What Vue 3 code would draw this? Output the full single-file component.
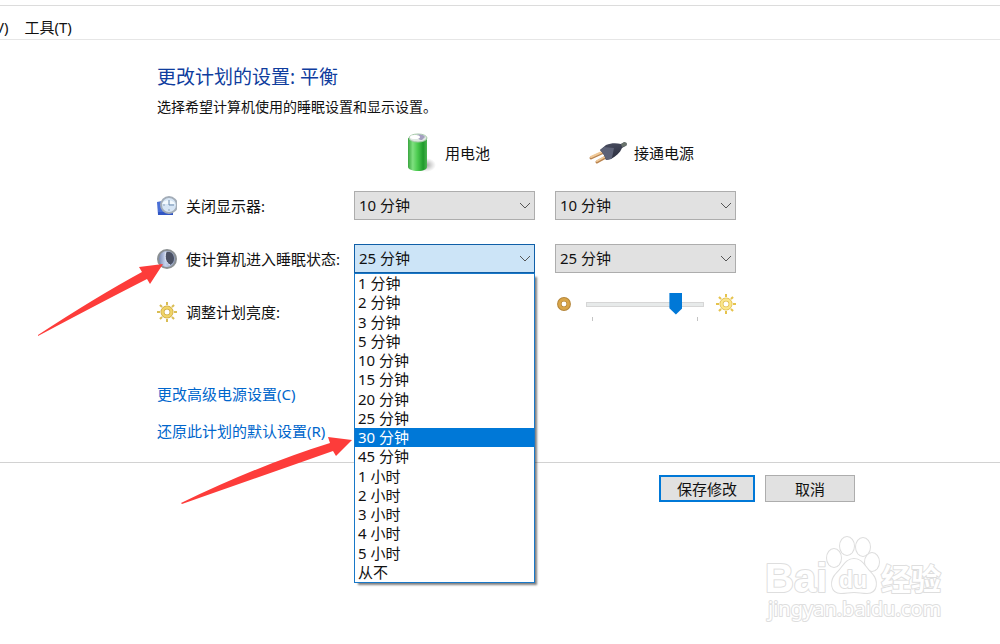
<script setup>
import { ref } from 'vue'

const durations = [
  '1 分钟', '2 分钟', '3 分钟', '5 分钟', '10 分钟', '15 分钟', '20 分钟', '25 分钟',
  '30 分钟', '45 分钟', '1 小时', '2 小时', '3 小时', '4 小时', '5 小时', '从不'
]

const displayBattery = ref('10 分钟')
const displayPlugged = ref('10 分钟')
const sleepBattery = ref('25 分钟')
const sleepPlugged = ref('25 分钟')
const brightness = ref(80)

// The sleep list for battery starts open
const listOpen = ref(true)
const highlighted = ref('30 分钟')

// eight rays of the sun icons
const rays = [0, 45, 90, 135, 180, 225, 270, 315]

const toggleList = () => {
  listOpen.value = !listOpen.value
}

const pick = (item) => {
  sleepBattery.value = item
  highlighted.value = item
  listOpen.value = false
}
</script>

<template>
  <div class="window">
    <nav class="menubar">
      <button type="button" class="menu-item clipped">V)</button>
      <button type="button" class="menu-item">工具(T)</button>
    </nav>

    <main class="content">
      <h1>更改计划的设置: 平衡</h1>
      <p class="intro">选择希望计算机使用的睡眠设置和显示设置。</p>

      <div class="row heads">
        <span></span>
        <div id="head-battery" class="head battery">
          <svg width="30" height="40" viewBox="0 0 30 40" aria-hidden="true">
            <defs>
              <linearGradient id="cell">
                <stop offset="0" stop-color="#3aa63f" />
                <stop offset="0.25" stop-color="#7fe080" />
                <stop offset="0.5" stop-color="#4ccb50" />
                <stop offset="0.8" stop-color="#1f9a2b" />
                <stop offset="1" stop-color="#4db552" />
              </linearGradient>
              <radialGradient id="shade">
                <stop offset="0" stop-color="#777" stop-opacity="0.7" />
                <stop offset="1" stop-color="#999" stop-opacity="0" />
              </radialGradient>
            </defs>
            <ellipse cx="20" cy="32" rx="10" ry="7" fill="url(#shade)" />
            <path d="M2 5v29c0 2 4 4 10 4s9-2 9-4V5z" fill="url(#cell)" />
            <ellipse cx="12" cy="5" rx="9" ry="4" fill="#dfe8e2" stroke="#a5c9a8" />
            <path d="M11 2c4-1 7 0 8 2l-3 3c-3 0-5-2-5-5z" fill="#a49fc0" />
            <ellipse cx="9" cy="4" rx="5" ry="2" fill="#fff" />
          </svg>
          <span>用电池</span>
        </div>
        <div id="head-plugged" class="head plug">
          <svg width="40" height="24" viewBox="0 0 40 24" aria-hidden="true">
            <defs>
              <linearGradient id="body" x1="0.3" y1="0" x2="0.6" y2="1">
                <stop offset="0" stop-color="#4a4e60" />
                <stop offset="0.45" stop-color="#3a3e50" />
                <stop offset="1" stop-color="#282b3a" />
              </linearGradient>
            </defs>
            <path d="M3 17l11-5M9 21l9-5" stroke="#b98450" stroke-width="3" stroke-linecap="round" />
            <path d="M3 16l11-5M9 20l9-5" stroke="#f0c998" stroke-width="2" stroke-linecap="round" />
            <path d="M12 9l6-5c5-2 10-2 15-1l4-2 2 3-5 3c-2 5-6 8-11 11l-5 1c-1-4-3-7-6-10z" fill="url(#body)" />
            <path d="M12 9l4-3 10 1-2 10-1 1-5 1c-1-4-3-7-6-10z" fill="#5d6277" />
            <path d="M33 3l3-2 3 1-1 3-4 1z" fill="#69736c" />
          </svg>
          <span>接通电源</span>
        </div>
      </div>

      <div class="row">
        <label id="label-display" class="name" for="display-battery">
          <svg width="20" height="20" viewBox="0 0 20 20" aria-hidden="true">
            <path d="M0 6l5-1 11 12v2H1z" fill="#4a6fd6" />
            <path d="M1 16h15v3H1z" fill="#3156c4" />
            <circle cx="12" cy="9" r="8" fill="#d6e5f5" stroke="#a3adb8" stroke-width="2" />
            <path d="M5 8a7 6 0 0 1 13 0z" fill="#f3f9fe" />
            <path d="M12 4v5h5" fill="none" stroke="#6d8bad" />
            <path d="M12 13v2M6 9h2" stroke="#8fa5be" />
          </svg>
          <span>关闭显示器:</span>
        </label>
        <div class="combo">
          <select id="display-battery" v-model="displayBattery">
            <option v-for="item in durations" :key="item">{{ item }}</option>
          </select>
          <svg class="chevron" width="12" height="8" viewBox="0 0 12 8"><path d="M1 1l5 5 5-5" /></svg>
        </div>
        <div class="combo">
          <select v-model="displayPlugged" aria-labelledby="label-display head-plugged">
            <option v-for="item in durations" :key="item">{{ item }}</option>
          </select>
          <svg class="chevron" width="12" height="8" viewBox="0 0 12 8"><path d="M1 1l5 5 5-5" /></svg>
        </div>
      </div>

      <div class="row">
        <label id="label-sleep" class="name" for="sleep-battery">
          <svg width="20" height="20" viewBox="0 0 20 20" aria-hidden="true">
            <defs>
              <linearGradient id="night">
                <stop offset="0" stop-color="#6f7fa9" />
                <stop offset="0.4" stop-color="#c5d2ee" />
                <stop offset="1" stop-color="#8794b4" />
              </linearGradient>
            </defs>
            <circle cx="10" cy="10" r="9" fill="url(#night)" stroke="#8b9093" stroke-width="2" />
            <path d="M9 3c5-1 8 2 8 7 0 3-2 5-4 6-4-2-6-7-4-13z" fill="#4b5164" />
            <path d="M9 3c-2 6 0 11 4 13" fill="none" stroke="#e5ecfa" />
          </svg>
          <span>使计算机进入睡眠状态:</span>
        </label>
        <div class="combo active">
          <select id="sleep-battery" v-model="sleepBattery" @mousedown.prevent="toggleList">
            <option v-for="item in durations" :key="item">{{ item }}</option>
          </select>
          <svg class="chevron" width="12" height="8" viewBox="0 0 12 8"><path d="M1 1l5 5 5-5" /></svg>
          <ul v-if="listOpen" class="list" role="listbox">
            <li
              v-for="item in durations"
              :key="item"
              role="option"
              :aria-selected="item === highlighted"
              :class="{ selected: item === highlighted }"
              @mouseenter="highlighted = item"
              @click="pick(item)"
            >
              {{ item }}
            </li>
          </ul>
        </div>
        <div class="combo">
          <select v-model="sleepPlugged" aria-labelledby="label-sleep head-plugged">
            <option v-for="item in durations" :key="item">{{ item }}</option>
          </select>
          <svg class="chevron" width="12" height="8" viewBox="0 0 12 8"><path d="M1 1l5 5 5-5" /></svg>
        </div>
      </div>

      <div class="row brightness">
        <label class="name" for="brightness">
          <svg width="20" height="20" viewBox="0 0 20 20" aria-hidden="true">
            <g fill="#d9bd54">
              <rect v-for="r in rays" :key="r" x="9" y="0" width="2" height="3" :transform="`rotate(${r} 10 10)`" />
            </g>
            <circle cx="10" cy="10" r="4.5" fill="#fff" stroke="#cda944" stroke-width="4" />
            <circle cx="10" cy="10" r="4.5" fill="none" stroke="#f0d467" stroke-width="2.5" />
          </svg>
          <span>调整计划亮度:</span>
        </label>
        <span></span>
        <div class="slider">
          <svg width="16" height="16" viewBox="0 0 16 16" aria-hidden="true">
            <circle cx="8" cy="8" r="4.7" fill="#fff" stroke="#b5863a" stroke-width="4.5" />
            <circle cx="8" cy="8" r="4.5" fill="none" stroke="#d9a548" stroke-width="2.8" />
          </svg>
          <div class="track">
            <input id="brightness" v-model="brightness" type="range" min="0" max="100" />
            <div class="ticks"><i></i><i></i></div>
          </div>
          <svg width="20" height="22" viewBox="0 0 20 20" aria-hidden="true">
            <g fill="#e6c34c">
              <rect v-for="r in rays" :key="r" x="9" y="0" width="2" height="3" :transform="`rotate(${r} 10 10)`" />
            </g>
            <circle cx="10" cy="10" r="4.5" fill="#fff" stroke="#dfbd50" stroke-width="4" />
            <circle cx="10" cy="10" r="4.5" fill="none" stroke="#fbe68a" stroke-width="2.5" />
          </svg>
        </div>
      </div>

      <div class="links">
        <a href="#advanced">更改高级电源设置(C)</a>
        <a href="#defaults">还原此计划的默认设置(R)</a>
      </div>
    </main>

    <footer class="actions">
      <button type="button" class="btn primary">保存修改</button>
      <button type="button" class="btn">取消</button>
    </footer>

    <svg class="arrows" width="360" height="510" viewBox="0 0 360 510" aria-hidden="true">
      <path d="M38 335Q96 297 142 272L139 267L163 264L150 284L147 279Q100 303 38 336Z" />
      <path d="M181 503Q262 464 330 443L328 437L352 440L336 456L333 451Q262 476 182 504Z" />
    </svg>

    <svg class="watermark" width="190" height="96" viewBox="0 0 190 96">
      <g class="outline">
        <ellipse cx="74" cy="28" rx="7" ry="9" />
        <ellipse cx="87" cy="16" rx="7" ry="9" />
        <ellipse cx="103" cy="17" rx="7" ry="9" />
        <ellipse cx="112" cy="32" rx="7" ry="9" />
        <path d="M94 29c8 0 11 8 17 14 8 8 6 20-4 20-5 0-8-1-13-1s-8 1-13 1c-10 0-12-12-4-20 6-6 9-14 17-14z" />
        <text x="5" y="62" class="big">Bai</text>
        <text x="79" y="58" class="small">du</text>
        <text x="121" y="60" class="cjk">经验</text>
        <text x="8" y="86" class="site">jingyan.baidu.com</text>
      </g>
    </svg>
  </div>
</template>

<style>
body {
  margin: 0;
  background: #fff;
}
</style>

<style scoped>
.window {
  position: relative;
  min-height: 100vh;
  box-sizing: border-box;
  padding-top: 5px;
  overflow: hidden;
  font-family: "Noto Sans", "Noto Sans CJK SC", sans-serif;
  font-size: 15px;
  line-height: 20px;
  color: #111;
}

button, select {
  font: inherit;
  color: inherit;
}

.menubar {
  display: flex;
  align-items: center;
  gap: 16px;
  height: 33px;
  border-top: 1px solid #dcdcdc;
  border-bottom: 1px solid #e6e6e6;
}

.menu-item {
  padding: 9px 0 0;
  border: none;
  background: none;
}

.clipped {
  margin-left: -5px;
}

.content {
  padding: 23px 20px 21px 157px;
}

h1 {
  margin: 0;
  font-size: 19px;
  font-weight: normal;
  line-height: 28px;
  color: #0f3d9e;
}

.intro {
  margin: 6px 0 16px;
  font-size: 14px;
}

.row {
  display: grid;
  grid-template-columns: 177fr 181fr 181fr;
  column-gap: 20px;
  align-items: center;
  max-width: 579px;
  margin-bottom: 24px;
}

.heads {
  margin-bottom: 18px;
}

.head {
  display: flex;
  align-items: center;
}

.battery {
  gap: 9px;
  padding-left: 52px;
}

.plug {
  gap: 6px;
  padding-left: 33px;
}

.name {
  display: flex;
  align-items: center;
  gap: 9px;
  width: 0;
  white-space: nowrap;
}

.name svg {
  flex: none;
}

.combo {
  position: relative;
  min-width: 0;
}

.combo select {
  display: block;
  width: 100%;
  height: 29px;
  padding: 0 24px 2px 4px;
  border: 1px solid #adadad;
  border-radius: 0;
  background: #e1e1e1;
  appearance: none;
  outline: none;
}

.combo.active select {
  border-color: #0f5fa8;
  background: #cce4f7;
}

.chevron {
  position: absolute;
  top: 11px;
  right: 4px;
  fill: none;
  stroke: #555;
  pointer-events: none;
}

.list {
  position: absolute;
  z-index: 2;
  top: 100%;
  left: 0;
  right: 0;
  display: grid;
  grid-auto-rows: 1fr;
  box-sizing: border-box;
  height: 310px;
  margin: 0;
  padding: 0;
  border: 1px solid #1878c8;
  background: #fff;
  box-shadow: 3px 3px 2px -1px rgba(0, 0, 0, 0.5);
  list-style: none;
}

.list li {
  padding-left: 3px;
  line-height: 19px;
  cursor: default;
}

.list .selected {
  background: #0078d7;
  color: #fff;
}

.brightness {
  margin-top: -4px;
  margin-bottom: 53px;
  min-height: 38px;
}

.slider {
  display: flex;
  align-items: flex-start;
  gap: 12px;
  align-self: start;
}

.slider > svg {
  flex: none;
}

.slider > svg:first-child {
  margin: 3px 0 0 1px;
}

.track {
  flex: 1;
  min-width: 0;
  padding-left: 2px;
}

.track input {
  display: block;
  width: 100%;
  height: 22px;
  margin: 0;
  appearance: none;
  background: none;
}

.track input::-webkit-slider-runnable-track {
  height: 5px;
  box-sizing: border-box;
  border: 1px solid #d6d6d6;
  background: #e7eaea;
}

.track input::-webkit-slider-thumb {
  appearance: none;
  width: 13px;
  height: 22px;
  margin-top: -10px;
  background: #0078d7;
  clip-path: polygon(0 0, 100% 0, 100% 72%, 50% 100%, 0 72%);
}

.ticks {
  display: flex;
  justify-content: space-between;
  padding: 2px 6px 0;
}

.ticks i {
  width: 1px;
  height: 4px;
  background: #c4c4c4;
}

.links {
  display: flex;
  flex-direction: column;
  align-items: flex-start;
  gap: 17px;
}

.links a {
  color: #0066cc;
  text-decoration: none;
}

.actions {
  display: flex;
  justify-content: flex-end;
  gap: 10px;
  padding: 12px 145px 0 20px;
  border-top: 1px solid #d2d2d2;
}

.btn {
  display: flex;
  align-items: center;
  justify-content: center;
  box-sizing: border-box;
  min-width: 90px;
  height: 27px;
  padding: 0 16px;
  border: 1px solid #adadad;
  background: #e1e1e1;
}

.btn.primary {
  border: 2px solid #0078d7;
}

.arrows {
  position: absolute;
  z-index: 3;
  top: 0;
  left: 0;
  fill: #fd3c3a;
  pointer-events: none;
}

.watermark {
  position: absolute;
  right: 50px;
  bottom: 18px;
}

.outline {
  fill: #fff;
  stroke: #dedede;
  stroke-width: 2;
  stroke-linejoin: round;
  paint-order: stroke;
}

.big {
  font: bold 40px "Liberation Sans", sans-serif;
}

.small {
  font: bold 23px "Liberation Sans", sans-serif;
}

.cjk {
  font: bold 30px "Noto Sans CJK SC", sans-serif;
}

.site {
  font: 20px "Noto Sans", sans-serif;
}
</style>
